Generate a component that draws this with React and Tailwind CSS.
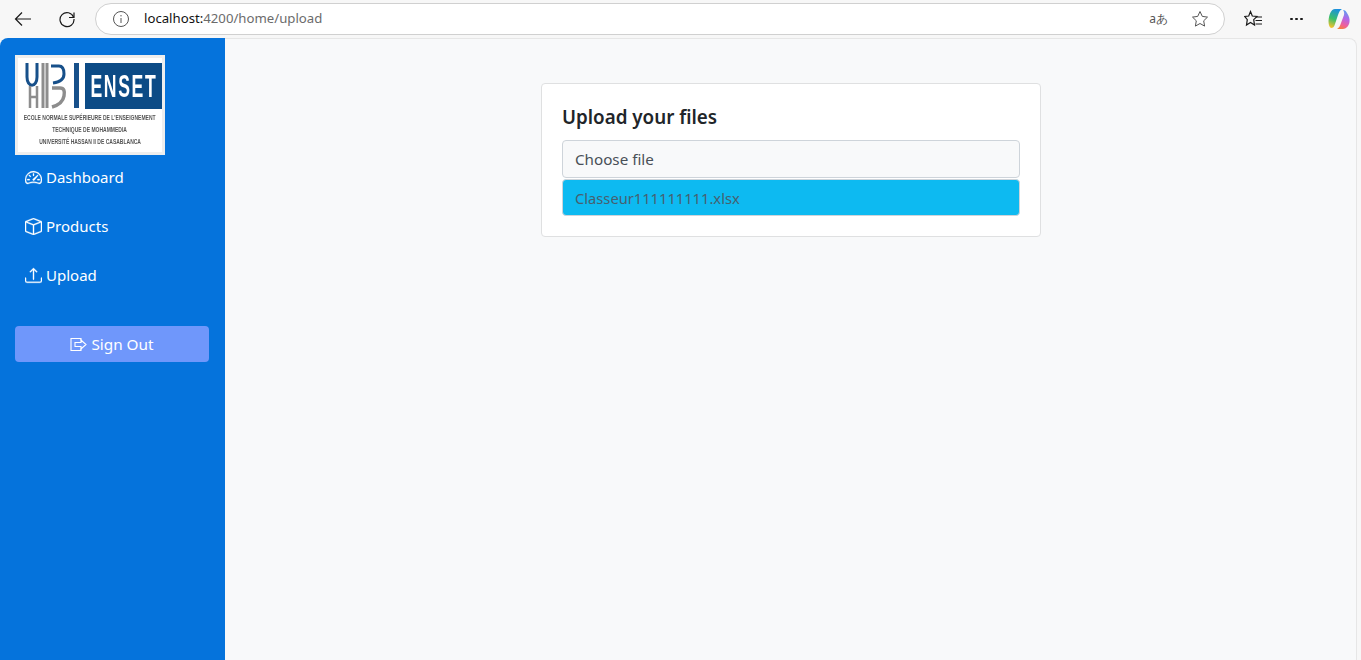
import React from 'react';
import { BsSpeedometer2, BsBox, BsUpload } from 'react-icons/bs';

const font = "font-['Noto_Sans','Open_Sans',sans-serif]";

const BrowserBar = () => (
  <div className="flex h-[38px] items-center bg-[#f7f7f7] font-['Noto_Sans',sans-serif]">
    <button className="ml-[13px] flex h-5 w-5 items-center justify-center text-[#1a1a1a]">
      <svg width="18" height="16" viewBox="0 0 18 16" fill="none" stroke="currentColor" strokeWidth="1.2">
        <path d="M17 8H1.5M8 1.5L1.5 8L8 14.5" />
      </svg>
    </button>
    <button className="ml-[24px] flex h-5 w-5 items-center justify-center text-[#1a1a1a]">
      <svg width="18" height="18" viewBox="0 0 18 18" fill="none" stroke="currentColor" strokeWidth="1.2">
        <path d="M15.6 7.2A7 7 0 1 0 16 9" />
        <path d="M16 2.5V7.5H11" />
      </svg>
    </button>
    <div className="ml-[18px] flex h-[32px] w-[1130px] items-center rounded-full border border-[#d0d0d0] bg-white">
      <svg className="ml-[16px]" width="18" height="18" viewBox="0 0 18 18" fill="none" stroke="#555" strokeWidth="1">
        <circle cx="9" cy="9" r="7.5" />
        <path d="M9 8v5M9 5v1.4" />
      </svg>
      <span className="ml-[14px] text-[13.2px] text-[#6b6b6b]">
        <span className="text-[#111]">localhost:</span>4200/home/upload
      </span>
      <span className="ml-auto text-[12px] leading-none text-[#555]">aあ</span>
      <svg className="ml-[23px] mr-[15px]" width="18" height="18" viewBox="0 0 18 18" fill="none" stroke="#555" strokeWidth="1">
        <path d="M9 1.5l2.3 4.9 5.2.7-3.8 3.7.9 5.3L9 13.5l-4.6 2.6.9-5.3L1.5 7.1l5.2-.7z" />
      </svg>
    </div>
    <svg className="ml-[19px]" width="18" height="18" viewBox="0 0 18 18" fill="none" stroke="#1a1a1a" strokeWidth="1.2">
      <path d="M6.500 1.500L8.300 6L13 6.500L9.700 9.600L10.500 15L6.500 12.500L2.500 15L3.300 9.600L0.700 6.500L4.700 6Z" />
      <path d="M12 7h6M11.500 10.500h6.500M11.500 14h6.500" />
    </svg>
    <span className="ml-[28px] flex gap-[2.500px]">
      <span className="h-[2.500px] w-[2.500px] rounded-full bg-[#1a1a1a]" />
      <span className="h-[2.500px] w-[2.500px] rounded-full bg-[#1a1a1a]" />
      <span className="h-[2.500px] w-[2.500px] rounded-full bg-[#1a1a1a]" />
    </span>
    <svg className="ml-[25px]" width="22" height="22" viewBox="0 0 22 22" fill="none">
      <defs>
        <linearGradient id="cpa" x1="0.6" y1="0" x2="0.3" y2="1">
          <stop offset="0" stopColor="#1b8fe0" />
          <stop offset="0.55" stopColor="#3cc06a" />
          <stop offset="1" stopColor="#f6c22d" />
        </linearGradient>
        <linearGradient id="cpb" x1="0.6" y1="0" x2="0.3" y2="1">
          <stop offset="0" stopColor="#5aa0f0" />
          <stop offset="0.4" stopColor="#b565e6" />
          <stop offset="0.75" stopColor="#f0609a" />
          <stop offset="1" stopColor="#f5803c" />
        </linearGradient>
      </defs>
      <path d="M7 1H14C12 2 11 4 10 7L7 16C6 19 5 20 3 20C1 19 0.500 16 0.500 13C1 7 3 1 7 1Z" fill="url(#cpa)" />
      <path d="M15 2C17 2 18 3 19 5C21 8 22 11 21.500 14C21 18 18 21 15 21H9C11 20 12 18 13 15L16 7C16.500 5 16 3 15 2Z" fill="url(#cpb)" />
    </svg>
  </div>
);

const Logo = () => (
  <div className="flex h-[100px] w-[150px] flex-col border-[3px] border-[#eeeeee] bg-white blur-[0.3px]">
    <div className="ml-[6px] mt-[4px] flex h-[47px] items-start">
      <svg width="61" height="47" viewBox="0 0 61 47" fill="none">
        <path d="M3 1v14c0 11 10 11 10 0V1" stroke="#17508a" strokeWidth="3" />
        <path d="M6 24v22M13 24v22M6 35h7" stroke="#8d8d8d" strokeWidth="2.500" />
        <path d="M19 1v45M23 1v45" stroke="#8d8d8d" strokeWidth="3" />
        <path d="M27 4h8c4 0 5 4 5 8 0 5-4 8-11 9" stroke="#17508a" strokeWidth="3" />
        <path d="M28 26h8c4 0 5 3 4 8-1 6-5 9-12 11" stroke="#8d8d8d" strokeWidth="3.500" />
        <rect x="50" y="1" width="5" height="45" fill="#17508a" />
      </svg>
      <div className="mt-[1px] flex h-[46px] w-[77px] items-center justify-center overflow-hidden bg-[#0c4b86] font-['Liberation_Sans',sans-serif] text-[32px] font-bold text-white">
        <span className="scale-x-[0.55] tracking-[3px]">ENSET</span>
      </div>
    </div>
    <div className="mt-[3px] flex flex-col items-center font-['Liberation_Sans',sans-serif] text-[6.500px] leading-[12px] font-bold whitespace-nowrap text-[#555]">
      <span className="scale-x-[0.77]">ECOLE NORMALE SUPÉRIEURE DE L'ENSEIGNEMENT</span>
      <span className="scale-x-[0.77]">TECHNIQUE DE MOHAMMEDIA</span>
      <span className="scale-x-[0.77]">UNIVERSITÉ HASSAN II DE CASABLANCA</span>
    </div>
  </div>
);

const NavItem = ({ icon, label }) => (
  <a className="flex h-[49px] items-center gap-[4px] pb-[5px] pl-[10px] text-[15px] text-white">
    {icon}
    <span>{label}</span>
  </a>
);

const Sidebar = () => (
  <aside className="flex w-[225px] shrink-0 flex-col rounded-tl-[8px] bg-[#0573dc] pl-[15px] pt-[17px]">
    <Logo />
    <nav className="flex flex-col">
      <NavItem icon={<BsSpeedometer2 size={17} stroke="currentColor" strokeWidth={0.3} />} label="Dashboard" />
      <NavItem icon={<BsBox size={17} stroke="currentColor" strokeWidth={0.3} />} label="Products" />
      <NavItem icon={<BsUpload size={17} stroke="currentColor" strokeWidth={0.3} />} label="Upload" />
    </nav>
    <button className="mt-[24px] flex h-[36px] w-[194px] items-center justify-center gap-[4px] rounded-[4px] bg-[#6f97fb] text-[15.300px] text-white">
      <svg width="17" height="15" viewBox="0 0 17 15" fill="none" stroke="currentColor" strokeWidth="1.100">
        <path d="M11 3.500V1.500H1v12h10v-2" />
        <path d="M5 5.500h6V3l5 4.500L11 12V9.500H5z" />
      </svg>
      <span>Sign Out</span>
    </button>
  </aside>
);

const App = () => {
  return (
    <div className={`flex h-[660px] w-[1361px] flex-col overflow-hidden bg-[#f7f7f7] ${font}`}>
      <BrowserBar />
      <div className="flex min-h-0 flex-1 pr-[4px]">
        <Sidebar />
        <main className="flex-1 rounded-tr-[8px] border-t border-r border-[#e6e6e6] bg-[#f8f9fa] pl-[316px] pt-[44px]">
          <div className="h-[154px] w-[500px] rounded-[4px] border border-[#dfe0e1] bg-white px-[20px] pt-[19px]">
            <h2 className="text-[18.800px] leading-[28px] font-semibold text-[#212529]">Upload your files</h2>
            <div className="mt-[9px] flex h-[38px] items-center rounded-[4px] border border-[#ced4da] bg-[#f8f9fa] pl-[12px] pt-[1px] text-[15.200px] text-[#495057]">
              Choose file
            </div>
            <div className="mt-[1px] flex h-[37px] items-center rounded-[4px] border border-[#ced4da] bg-[#0dbaf1] pl-[12px] pt-[2px] text-[14.700px] text-[#47606f]">
              Classeur111111111.xlsx
            </div>
          </div>
        </main>
      </div>
    </div>
  );
};

export default App;
